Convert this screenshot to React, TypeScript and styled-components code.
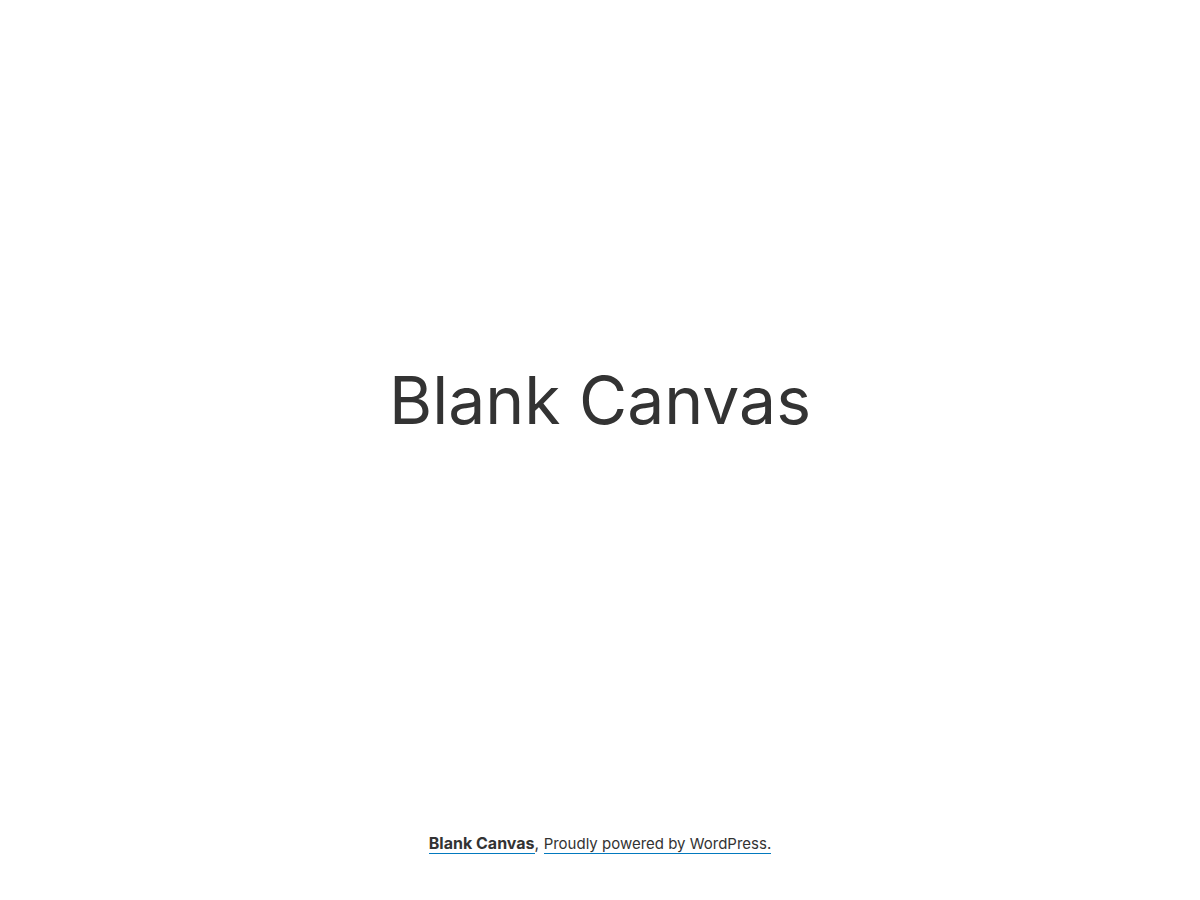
import React from "react";
import styled, { createGlobalStyle } from "styled-components";

const GlobalStyle = createGlobalStyle`
  *, *::before, *::after { box-sizing: border-box; }
  body {
    margin: 0;
    background: #fff;
    color: #333;
    font-family: Inter, "Liberation Sans", sans-serif;
    font-size: 16px;
    line-height: 24px;
  }
`;

const Page = styled.div`
  min-height: 100vh;
  display: flex;
  flex-direction: column;
`;

const Main = styled.main`
  flex: 1;
  display: flex;
  align-items: center;
  justify-content: center;
  padding: 32px 16px;
`;

const Title = styled.h1`
  margin: 0;
  font-size: 66px;
  line-height: 80px;
  font-weight: 400;
  text-align: center;
`;

const Footer = styled.footer`
  padding: 32px 16px 44px;
  text-align: center;
`;

const FooterLink = styled.a<{ $strong?: boolean }>`
  color: inherit;
  font-size: ${(p) => (p.$strong ? 16 : 15)}px;
  font-weight: ${(p) => (p.$strong ? 700 : 400)};
  text-decoration: none;
  border-bottom: 1px solid #0279be;
`;

export default function App() {
  return (
    <>
      <GlobalStyle />
      <Page>
        <Main>
          <Title>Blank Canvas</Title>
        </Main>
        <Footer>
          <FooterLink href="#home" $strong>
            Blank Canvas
          </FooterLink>
          , <FooterLink href="#wordpress">Proudly powered by WordPress.</FooterLink>
        </Footer>
      </Page>
    </>
  );
}
